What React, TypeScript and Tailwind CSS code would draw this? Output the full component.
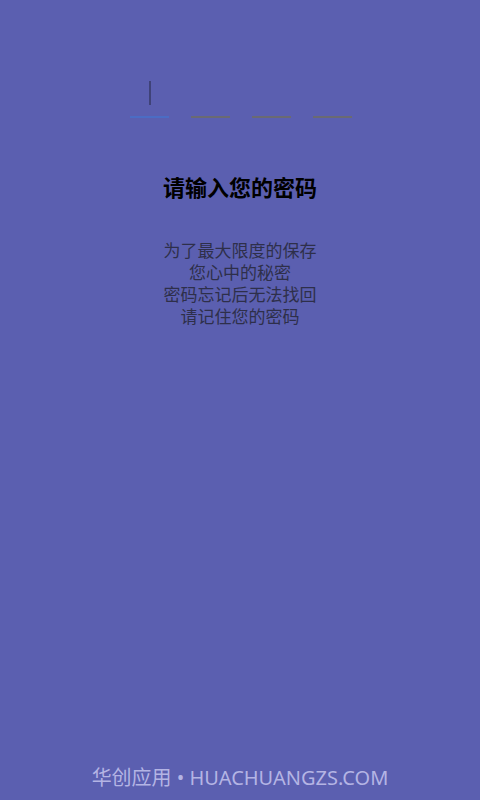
import React from "react";

export default function App() {
  const font = { fontFamily: '"Noto Sans", "Noto Sans CJK SC", sans-serif' };
  return (
    <div className="w-[480px] h-[800px] bg-[#5b5fb0] flex flex-col items-center relative overflow-hidden" style={font}>
      <div className="mt-[81px] flex gap-[22px] pl-[2px]">
        {[0, 1, 2, 3].map((i) => (
          <div key={i} className="w-[39px] h-[37px] flex flex-col items-center justify-between">
            {i === 0 ? <div className="w-[2px] h-[24px] bg-[#3f4278]" /> : <div />}
            <div className={i === 0 ? "w-full h-[2px] bg-[#4b6cc4]" : "w-full h-[2px] bg-[#6a6a72]"} />
          </div>
        ))}
      </div>
      <div className="mt-[54px] text-[22px] leading-[30px] font-bold text-black">请输入您的密码</div>
      <div className="mt-[38px] text-[17px] leading-[22px] text-[#2e2f4a] text-center">
        <div>为了最大限度的保存</div>
        <div>您心中的秘密</div>
        <div>密码忘记后无法找回</div>
        <div>请记住您的密码</div>
      </div>
      <div className="absolute bottom-[9px] left-0 right-0 text-center text-[20px] leading-[26px] text-[#b4b4e4]">
        华创应用 • HUACHUANGZS.COM
      </div>
    </div>
  );
}
